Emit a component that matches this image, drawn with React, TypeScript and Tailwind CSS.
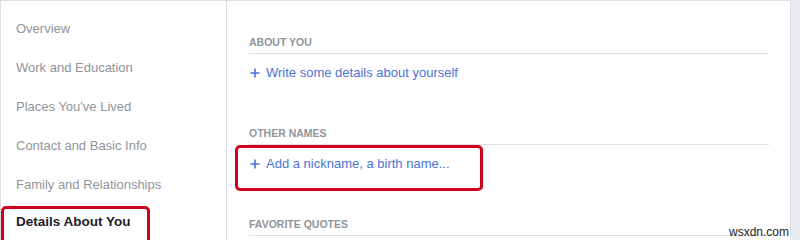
import React from "react"

const navItems = [
  "Overview",
  "Work and Education",
  "Places You've Lived",
  "Contact and Basic Info",
  "Family and Relationships",
]

const sections = [
  { title: "ABOUT YOU", link: "Write some details about yourself" },
  { title: "OTHER NAMES", link: "Add a nickname, a birth name..." },
  { title: "FAVORITE QUOTES", link: "" },
]

const Plus = () => (
  <svg width="10" height="10" viewBox="0 0 10 10" className="shrink-0">
    <path d="M5 0.5v9M0.5 5h9" stroke="#4b73d4" strokeWidth="1.6" />
  </svg>
)

export default function App() {
  return (
    <div
      className="relative w-[800px] h-[240px] overflow-hidden bg-[#e9ebee] flex"
      style={{ fontFamily: '"Liberation Sans", Arial, sans-serif' }}
    >
      <div className="w-[791px] h-[260px] bg-white border-t border-l border-r border-[#dddfe2] flex">
        {/* left nav */}
        <div className="w-[226px] border-r border-[#dddfe2] pt-2 pl-[15px]">
          {navItems.map((item) => (
            <div key={item} className="h-[39px] leading-[39px] text-[13px] text-[#90949c]">
              {item}
            </div>
          ))}
          <div className="h-[36px] leading-[36px] text-[13.5px] font-bold text-[#1d2129]">
            Details About You
          </div>
        </div>

        {/* content */}
        <div className="flex-1 pt-[33px] pl-[22px] pr-[21px]">
          {sections.map((s, i) => (
            <div key={s.title} className={i > 0 ? "mt-[42px]" : ""}>
              <div className="h-[20px] leading-4 pb-1 border-b border-[#dddfe2] text-[10.5px] font-bold text-[#90949c]">
                {s.title}
              </div>
              {s.link && (
                <div className="mt-[9px] h-5 flex items-center gap-[6px] pl-[1px] text-[13px] text-[#4b73d4]">
                  <Plus />
                  <span>{s.link}</span>
                </div>
              )}
            </div>
          ))}
        </div>
      </div>

      {/* annotation boxes */}
      <div className="absolute left-[1px] top-[206px] w-[149px] h-[40px] border-[3px] border-[#d0021b] rounded-[5px]" />
      <div className="absolute left-[235px] top-[145px] w-[248px] h-[46px] border-[3px] border-[#d0021b] rounded-[5px]" />

      <div className="absolute right-[11px] top-[224px] text-[12px] leading-4 text-[#222]">
        wsxdn.com
      </div>
    </div>
  )
}
